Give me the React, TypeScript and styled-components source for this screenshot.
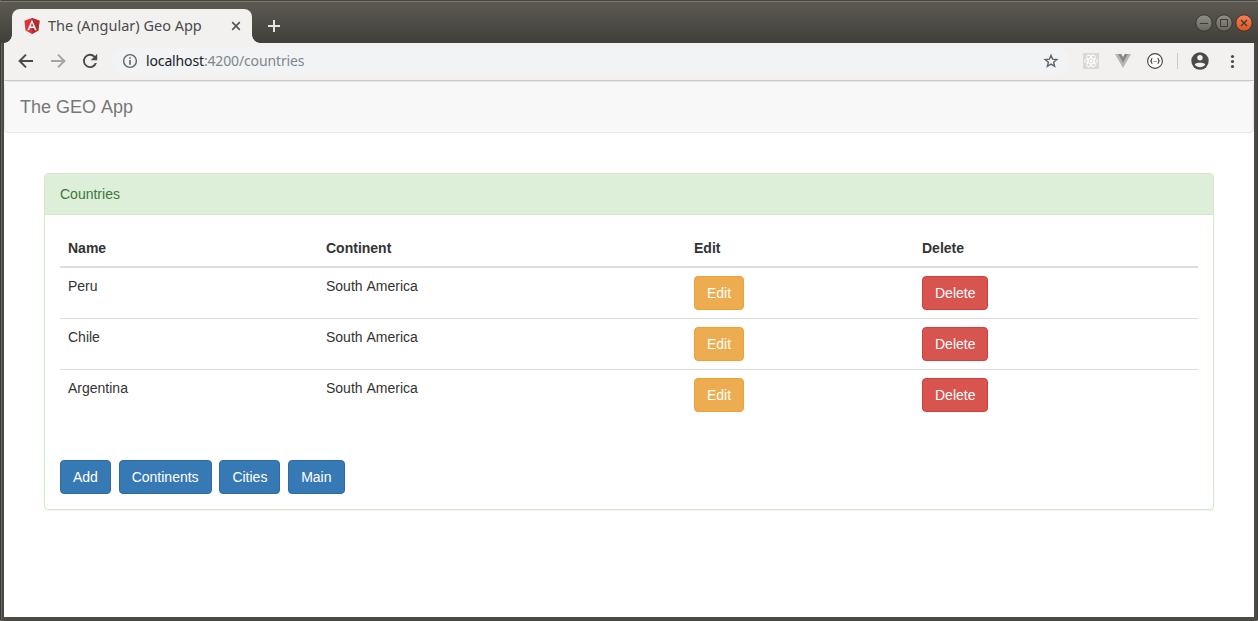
import React from "react";
import styled, { createGlobalStyle } from "styled-components";

const GlobalStyle = createGlobalStyle`
  * { box-sizing: border-box; }
  body {
    margin: 0;
    background: #fff;
    overflow: hidden;
    font: 14px/20px "Liberation Sans", Arial, sans-serif;
    font-kerning: none;
    color: #333;
  }
`;

const Window = styled.div`
  display: flex;
  flex-direction: column;
  width: 1258px;
  height: 621px;
  padding: 0 4px 4px;
  background: #4c4a44;
  border-radius: 2px;
  box-shadow: inset 1px 0 #3b3a36, inset 2px 0 #66645e, inset -1px 0 #3f3e3a;
  overflow: hidden;
`;

const TitleBar = styled.header`
  display: flex;
  align-items: flex-end;
  flex: none;
  height: 43px;
  margin: 0 -4px;
  padding-left: 12px;
  background: linear-gradient(#5c5a52, #403f3a);
  border-top: 1px solid #45443f;
  box-shadow: inset 0 1px #7d7b74;
`;

const Tab = styled.div`
  position: relative;
  display: flex;
  align-items: center;
  width: 240px;
  height: 34px;
  padding: 0 11px 0 12px;
  background: #f2f1ef;
  border-radius: 8px 8px 0 0;

  &::before,
  &::after {
    content: "";
    position: absolute;
    bottom: 0;
    width: 8px;
    height: 8px;
  }
  &::before {
    left: -8px;
    background: radial-gradient(circle at 0 0, transparent 7.5px, #f2f1ef 8px);
  }
  &::after {
    right: -8px;
    background: radial-gradient(circle at 100% 0, transparent 7.5px, #f2f1ef 8px);
  }
`;

const TabTitle = styled.span`
  flex: 1;
  margin-left: 8px;
  padding-bottom: 2px;
  font: 14.5px/20px "Noto Sans", sans-serif;
  color: #4b4b4b;
  white-space: nowrap;
`;

const NewTab = styled.div`
  display: flex;
  height: 34px;
  align-items: center;
  margin-left: 14px;
`;

const WindowControls = styled.div`
  display: flex;
  align-self: flex-start;
  gap: 2px;
  margin: 13px 5px 0 auto;
`;

const Toolbar = styled.div`
  display: flex;
  align-items: center;
  flex: none;
  height: 38px;
  padding: 0 14px 1px 10px;
  background: #f2f1ef;
  border-bottom: 1px solid #cbcac8;
`;

const NavButtons = styled.div`
  display: flex;
  gap: 8px;
`;

const AddressBar = styled.div`
  display: flex;
  align-items: center;
  flex: 1;
  height: 28px;
  margin-left: 10px;
  padding: 0 10px;
  border-radius: 14px;
  background: #f1f3f4;
`;

const Url = styled.span`
  flex: 1;
  margin-left: 8px;
  font: 14px/20px "Noto Sans", sans-serif;
  letter-spacing: -0.14px;
  color: #80868b;
  b {
    font-weight: 400;
    color: #202124;
  }
`;

const Extensions = styled.div`
  display: flex;
  align-items: center;
  gap: 16px;
  margin-left: 14px;
`;

const Separator = styled.div`
  width: 1px;
  height: 16px;
  margin: 0 12px 0 14px;
  background: #c9c9c9;
`;

const Menu = styled.div`
  display: flex;
  margin-left: 14px;
`;

const Page = styled.main`
  flex: 1;
  background: #fff;
`;

const Navbar = styled.nav`
  height: 52px;
  padding: 15px;
  border: 1px solid #e7e7e7;
  border-radius: 4px;
  background: #f8f8f8;
  color: #777;
  font-size: 18px;
  line-height: 20px;
`;

const Panel = styled.section`
  margin: 40px;
  border: 1px solid #d6e9c6;
  border-radius: 4px;
  box-shadow: 0 1px 1px rgba(0, 0, 0, 0.05);
`;

const PanelHeading = styled.div`
  padding: 10px 15px;
  border-bottom: 1px solid #d6e9c6;
  border-radius: 3px 3px 0 0;
  background: #ddefd8;
  color: #3c763d;
`;

const PanelBody = styled.div`
  padding: 15px;
`;

const Table = styled.div`
  margin-bottom: 40px;
`;

const Row = styled.div<{ $head?: boolean; $last?: boolean }>`
  display: grid;
  grid-template-columns: 258px 368px 228px 284px;
  height: ${(p) => (p.$head ? 38 : p.$last ? 50 : 51)}px;
  border-bottom: ${(p) => (p.$head ? "2px" : p.$last ? "0" : "1px")} solid #ddd;
  font-weight: ${(p) => (p.$head ? 700 : 400)};
`;

const Cell = styled.div`
  padding: 8px;
`;

const tones = {
  primary: ["#3779b5", "#2e6da4"],
  warning: ["#eeac50", "#eea236"],
  danger: ["#d8544f", "#d43f3a"],
};

const Button = styled.button<{ $tone: keyof typeof tones }>`
  display: block;
  height: 34px;
  padding: 6px 12px;
  border: 1px solid ${(p) => tones[p.$tone][1]};
  border-radius: 4px;
  background: ${(p) => tones[p.$tone][0]};
  color: #fff;
  font: inherit;
`;

const Actions = styled.div`
  display: flex;
  gap: 7.78px;
`;

const countries = [
  { name: "Peru", continent: "South America" },
  { name: "Chile", continent: "South America" },
  { name: "Argentina", continent: "South America" },
];

const AngularLogo = () => (
  <svg width="16" height="16" viewBox="0 0 16 16">
    <path d="M8 0 15.6 2.7 14.4 12.5 8 16 1.6 12.5.4 2.7Z" fill="#dd3237" />
    <path d="M8 0 15.6 2.7 14.4 12.5 8 16Z" fill="#b5292f" />
    <path d="M8 1.8 3.3 12.2H5L6 9.9H10L11 12.2H12.7ZM8 5 9.4 8.4H6.6Z" fill="#fff" fillRule="evenodd" />
  </svg>
);

const BackIcon = ({ color, flip }: { color: string; flip?: boolean }) => (
  <svg width="24" height="24" viewBox="0 0 24 24">
    <path
      d="M19 12H5.8M12 5.6 5.6 12 12 18.4"
      fill="none"
      stroke={color}
      strokeWidth="2"
      transform={flip ? "translate(24 0) scale(-1 1)" : undefined}
    />
  </svg>
);

const ReloadIcon = () => (
  <svg width="24" height="24" viewBox="0 0 24 24">
    <path d="M17.1 6.9A7.1 7.1 0 1 0 18.9 14H16.8A5.2 5.2 0 1 1 15.7 8.3L12.7 11.3H19.2V4.8Z" fill="#4a4a4a" />
  </svg>
);

const InfoIcon = () => (
  <svg width="16" height="16" viewBox="0 0 16 16">
    <circle cx="8" cy="8" r="6.4" fill="none" stroke="#5f6368" strokeWidth="1.4" />
    <path d="M8 4.2V5.8M8 7V11.8" stroke="#5f6368" strokeWidth="1.6" />
  </svg>
);

const StarIcon = () => (
  <svg width="16" height="16" viewBox="0 0 16 16">
    <path
      d="M8 2.3 9.6 6.2 13.8 6.5 10.6 9.2 11.6 13.3 8 11.1 4.4 13.3 5.4 9.2 2.2 6.5 6.4 6.2Z"
      fill="none"
      stroke="#5f6368"
      strokeWidth="1.4"
    />
  </svg>
);

const ReactIcon = () => (
  <svg width="16" height="16" viewBox="0 0 16 16">
    <path d="M0 0H16V16H0Z" fill="#d8d8d8" />
    <g fill="none" stroke="#fff" strokeWidth="1">
      <ellipse cx="8" cy="8" rx="6.5" ry="2.6" />
      <ellipse cx="8" cy="8" rx="6.5" ry="2.6" transform="rotate(60 8 8)" />
      <ellipse cx="8" cy="8" rx="6.5" ry="2.6" transform="rotate(120 8 8)" />
    </g>
    <circle cx="8" cy="8" r="1.3" fill="#fff" />
  </svg>
);

const VueIcon = () => (
  <svg width="16" height="16" viewBox="0 0 16 16">
    <path d="M0 1H16L8 15Z" fill="#b5b5b5" />
    <path d="M3.2 1H12.8L8 9.4Z" fill="#858585" />
    <path d="M6.2 1H9.8L8 4Z" fill="#f2f1ef" />
  </svg>
);

const BracesIcon = () => (
  <svg width="16" height="16" viewBox="0 0 16 16">
    <circle cx="8" cy="8" r="7.4" fill="#fff" stroke="#444" strokeWidth="1.1" />
    <path
      d="M5.4 5.4C4.2 5.4 4.8 7.6 3.8 8C4.8 8.4 4.2 10.6 5.4 10.6M10.6 5.4C11.8 5.4 11.2 7.6 12.2 8C11.2 8.4 11.8 10.6 10.6 10.6"
      fill="none"
      stroke="#444"
      strokeWidth="1.2"
    />
    <path d="M6 8.5H10" stroke="#aaa" />
  </svg>
);

const ProfileIcon = () => (
  <svg width="20" height="20" viewBox="0 0 20 20">
    <circle cx="10" cy="10" r="8.7" fill="#4a4a4a" />
    <circle cx="10" cy="6.7" r="2.7" fill="#f2f1ef" />
    <path d="M4.8 13.6C5 11 15 11 15.2 13.6A6.3 6.3 0 0 1 4.8 13.6Z" fill="#f2f1ef" />
  </svg>
);

const DotsIcon = () => (
  <svg width="16" height="16" viewBox="0 0 16 16" fill="#4a4a4a">
    <circle cx="8.5" cy="3.5" r="1.6" />
    <circle cx="8.5" cy="8.5" r="1.6" />
    <circle cx="8.5" cy="13.5" r="1.6" />
  </svg>
);

const CloseIcon = () => (
  <svg width="10" height="10" viewBox="0 0 10 10">
    <path d="m1.2 1.2 7.6 7.6m0-7.6L1.2 8.8" stroke="#55565a" strokeWidth="1.7" />
  </svg>
);

const PlusIcon = () => (
  <svg width="16" height="16" viewBox="0 0 16 16">
    <path d="M8 2V14M2 8H14" stroke="#e6e5e2" strokeWidth="2" />
  </svg>
);

const ControlIcon = ({ kind }: { kind: "min" | "max" | "close" }) => (
  <svg width="18" height="18" viewBox="0 0 18 18">
    <defs>
      <linearGradient id={`fill-${kind}`} x2="0" y2="1">
        <stop stopColor={kind === "close" ? "#f68058" : "#908e86"} />
        <stop offset="1" stopColor={kind === "close" ? "#e2511f" : "#686660"} />
      </linearGradient>
    </defs>
    <circle cx="9" cy="9" r="8.2" fill={`url(#fill-${kind})`} stroke="#37362f" strokeWidth="1" />
    <path
      d={kind === "min" ? "M5 9.5H13" : kind === "max" ? "M5.5 5.5H12.5V12.5H5.5Z" : "M6 6 12 12M12 6 6 12"}
      fill="none"
      stroke="#3b3a35"
      strokeWidth={kind === "close" ? 1.4 : 1}
    />
  </svg>
);

export default function App() {
  return (
    <>
      <GlobalStyle />
      <Window>
        <TitleBar>
          <Tab>
            <AngularLogo />
            <TabTitle>The (Angular) Geo App</TabTitle>
            <CloseIcon />
          </Tab>
          <NewTab>
            <PlusIcon />
          </NewTab>
          <WindowControls>
            <ControlIcon kind="min" />
            <ControlIcon kind="max" />
            <ControlIcon kind="close" />
          </WindowControls>
        </TitleBar>
        <Toolbar>
          <NavButtons>
            <BackIcon color="#4a4a4a" />
            <BackIcon color="#a5a5a4" flip />
            <ReloadIcon />
          </NavButtons>
          <AddressBar>
            <InfoIcon />
            <Url>
              <b>localhost</b>:4200/countries
            </Url>
            <StarIcon />
          </AddressBar>
          <Extensions>
            <ReactIcon />
            <VueIcon />
            <BracesIcon />
          </Extensions>
          <Separator />
          <ProfileIcon />
          <Menu>
            <DotsIcon />
          </Menu>
        </Toolbar>
        <Page>
          <Navbar>The GEO App</Navbar>
          <Panel>
            <PanelHeading>Countries</PanelHeading>
            <PanelBody>
              <Table>
                <Row $head>
                  <Cell>Name</Cell>
                  <Cell>Continent</Cell>
                  <Cell>Edit</Cell>
                  <Cell>Delete</Cell>
                </Row>
                {countries.map((c, i) => (
                  <Row key={c.name} $last={i === countries.length - 1}>
                    <Cell>{c.name}</Cell>
                    <Cell>{c.continent}</Cell>
                    <Cell>
                      <Button $tone="warning">Edit</Button>
                    </Cell>
                    <Cell>
                      <Button $tone="danger">Delete</Button>
                    </Cell>
                  </Row>
                ))}
              </Table>
              <Actions>
                <Button $tone="primary">Add</Button>
                <Button $tone="primary">Continents</Button>
                <Button $tone="primary">Cities</Button>
                <Button $tone="primary">Main</Button>
              </Actions>
            </PanelBody>
          </Panel>
        </Page>
      </Window>
    </>
  );
}
